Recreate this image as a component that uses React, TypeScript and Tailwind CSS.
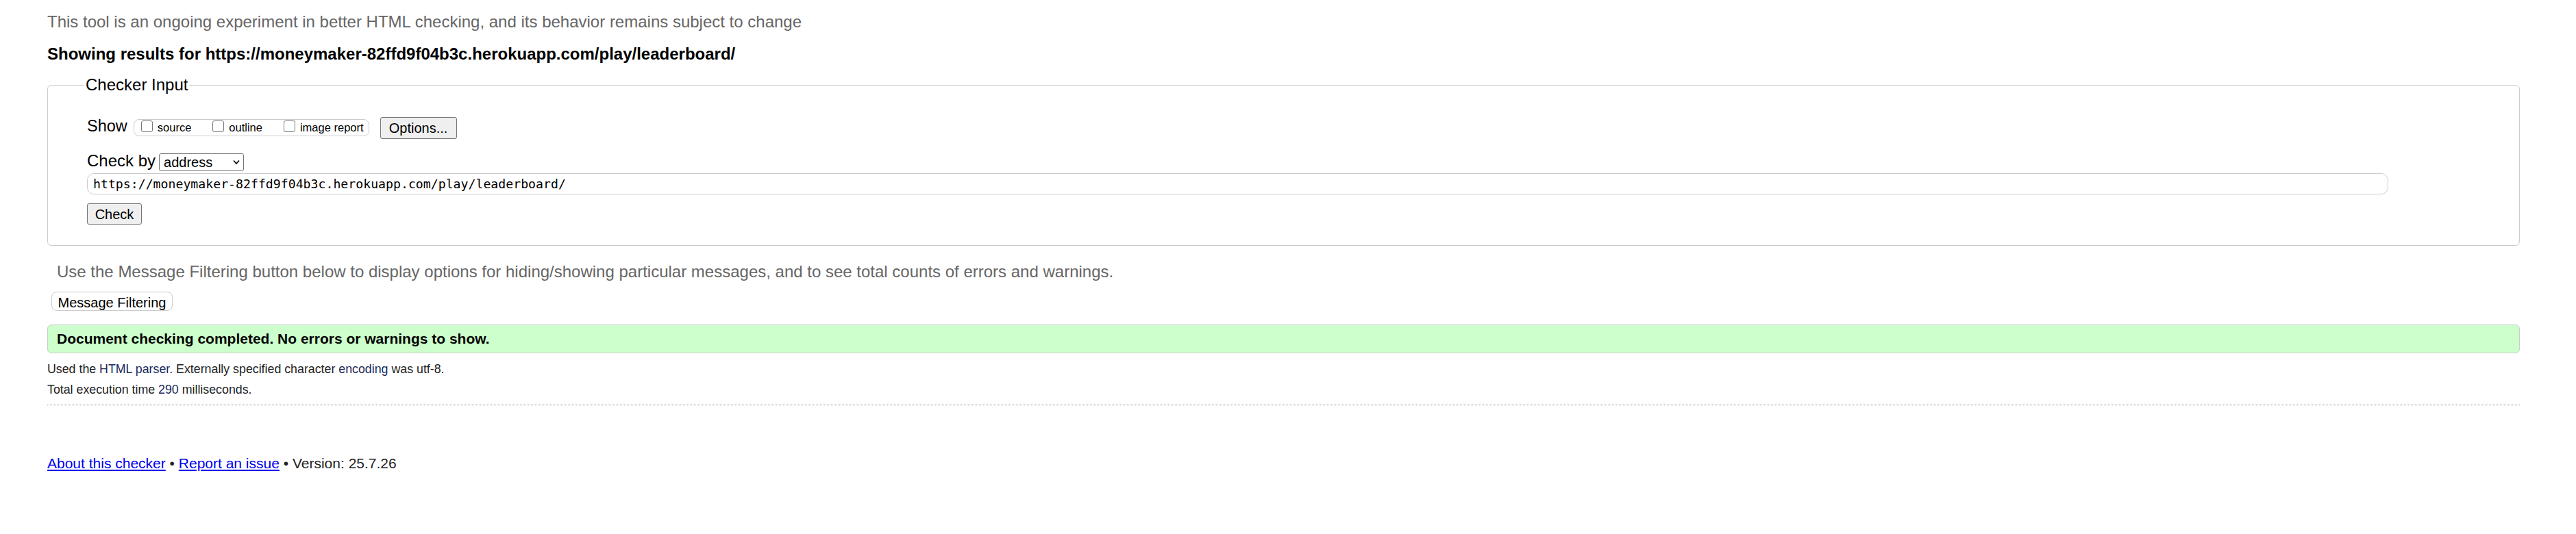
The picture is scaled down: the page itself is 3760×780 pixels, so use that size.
import React from 'react';

const url = 'https://moneymaker-82ffd9f04b3c.herokuapp.com/play/leaderboard/';

function Box({ label }: { label: string }) {
  return (
    <label className="flex items-start">
      <span className="mt-[1px] h-[17px] w-[17px] rounded-[3px] border border-[#767676] bg-white" />
      <span className="ml-[7px] mt-[1px] text-[16.5px] leading-[20px] text-black">{label}</span>
    </label>
  );
}

export default function App() {
  return (
    <div className="min-h-[780px] bg-white pl-[69px] pr-[82px] pt-[18px] font-['Liberation_Sans',Arial,sans-serif] text-[#222]">
      {/* Intro */}
      <p className="text-[24px] leading-[28px] text-[#666]">
        This tool is an ongoing experiment in better HTML checking, and its behavior remains subject to change
      </p>
      <p className="mt-[19px] text-[24px] font-bold leading-[28px] text-black">
        Showing results for {url}
      </p>

      {/* Checker input */}
      <fieldset className="mt-[17px] rounded-[6px] border border-[#ccc] pb-[30px] pl-[57px] pt-[33px]">
        <legend className="-ml-[4px] px-[2px] text-[24px] leading-[28px] text-black">Checker Input</legend>

        <div className="flex items-start">
          <span className="mt-[1px] text-[23.5px] leading-[24px] text-black">Show</span>
          <div className="ml-[9px] mt-[3px] flex h-[25px] items-start gap-[31px] rounded-[8px] border border-[#ccc] pl-[10px] pr-[7px]">
            <Box label="source" />
            <Box label="outline" />
            <Box label="image report" />
          </div>
          <button className="ml-[16px] h-[32px] w-[112px] rounded-[3px] border border-[#767676] bg-[#efefef] text-[20px] text-black">
            Options...
          </button>
        </div>

        <div className="mt-[20px] flex items-start">
          <span className="text-[24px] leading-[24px] text-black">Check by</span>
          <div className="ml-[5px] mt-[1px] flex h-[26px] w-[124px] items-center justify-between rounded-[3px] border border-[#767676] bg-white pl-[6px] pr-[5px]">
            <span className="text-[20px] leading-[24px] text-black">address</span>
            <svg width="10" height="8" viewBox="0 0 10 8" className="text-black">
              <path d="M1 1.5 L5 6 L9 1.5" fill="none" stroke="currentColor" strokeWidth="1.6" />
            </svg>
          </div>
        </div>

        <div className="mt-[3px] flex h-[31px] w-[3359px] items-center rounded-[10px] border border-[#ccc] pl-[8px]">
          <span className="font-['DejaVu_Sans_Mono',monospace] text-[18.2px] leading-[22px] text-black">{url}</span>
        </div>

        <button className="mt-[13px] h-[31px] w-[80px] rounded-[3px] border border-[#767676] bg-[#efefef] text-[20px] text-black">
          Check
        </button>
      </fieldset>

      {/* Filtering */}
      <p className="ml-[14px] mt-[25px] text-[24px] leading-[26px] text-[#666]">
        Use the Message Filtering button below to display options for hiding/showing particular messages, and to see total counts of errors and warnings.
      </p>
      <button className="ml-[6px] mt-[16px] h-[28px] w-[177px] rounded-[8px] border border-[#ccc] bg-white text-[20px] text-black">
        Message Filtering
      </button>

      {/* Result */}
      <div className="mt-[18px] flex h-[42px] items-center rounded-[6px] border border-[#ccc] bg-[#ccffcc] pl-[13px]">
        <span className="text-[21px] font-bold leading-[26px] text-black">
          Document checking completed. No errors or warnings to show.
        </span>
      </div>

      <p className="mt-[12px] text-[17.8px] leading-[22px] text-[#222]">
        Used the <span className="text-[#1a2a5c]">HTML parser</span>. Externally specified character{' '}
        <span className="text-[#1a2a5c]">encoding</span> was utf-8.
      </p>
      <p className="mt-[8px] text-[17.8px] leading-[22px] text-[#222]">
        Total execution time <span className="text-[#1a2a5c]">290</span> milliseconds.
      </p>

      <hr className="mt-[11px] border-0 border-t border-dotted border-[#888]" />

      {/* Footer */}
      <p className="mt-[72px] text-[21px] leading-[26px] text-[#222]">
        <a href="#" className="text-[#0000ee] underline">About this checker</a> •{' '}
        <a href="#" className="text-[#0000ee] underline">Report an issue</a> • Version: 25.7.26
      </p>
    </div>
  );
}
